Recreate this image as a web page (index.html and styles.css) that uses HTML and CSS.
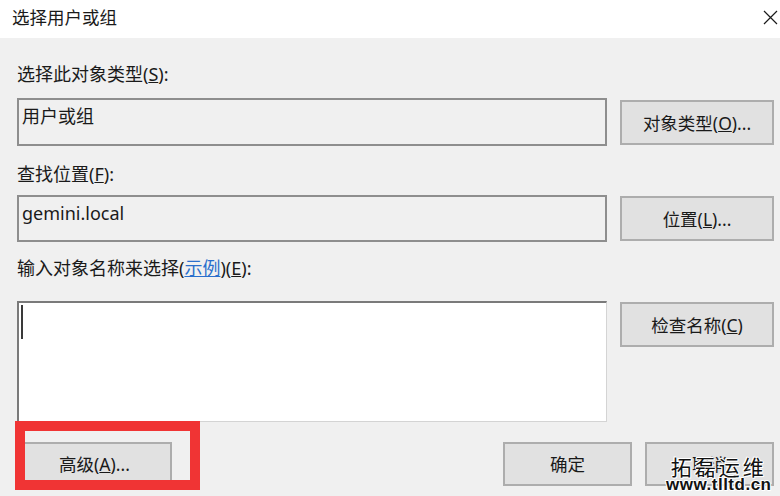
FILE: index.html
```html
<!DOCTYPE html>
<html lang="zh-CN">
<head>
<meta charset="utf-8">
<title>选择用户或组</title>
<link rel="stylesheet" href="styles.css">
</head>
<body>
<div class="window">
  <div class="titlebar">
    <span class="title">选择用户或组</span>
    <span class="close" aria-label="关闭">
      <svg width="15" height="15" viewBox="0 0 15 15"><path d="M1 1 L14 14 M14 1 L1 14" stroke="#1a1a1a" stroke-width="1.2" fill="none"/></svg>
    </span>
  </div>
  <div class="main">
    <div class="label l1">选择此对象类型(<u>S</u>):</div>
    <div class="row r1">
      <div class="field">用户或组</div>
      <button class="btn side">对象类型(<u>O</u>)...</button>
    </div>
    <div class="label l2">查找位置(<u>F</u>):</div>
    <div class="row r2">
      <div class="field">gemini.local</div>
      <button class="btn side">位置(<u>L</u>)...</button>
    </div>
    <div class="label l3">输入对象名称来选择(<span class="link">示例</span>)(<u>E</u>):</div>
    <div class="row r3">
      <div class="input"><span class="caret"></span></div>
      <button class="btn side">检查名称(<u>C</u>)</button>
    </div>
    <div class="bottom">
      <button class="btn adv">高级(<u>A</u>)...</button>
      <div class="spacer"></div>
      <button class="btn action">确定</button>
      <button class="btn action">取消</button>
      <div class="highlight"></div>
      <div class="watermark">
        <div class="wm1">拓磊运维</div>
        <div class="wm2">www.tlltd.cn</div>
      </div>
    </div>
  </div>
</div>
</body>
</html>
```

FILE: styles.css
```css
* { box-sizing: border-box; }
html, body { margin: 0; padding: 0; }
body {
  width: 780px;
  height: 496px;
  overflow: hidden;
  background: #f0f0f0;
  font-family: "Noto Sans", "Noto Sans CJK SC", sans-serif;
  font-size: 18px;
  color: #1a1a1a;
}
.window { width: 780px; height: 496px; }
.titlebar {
  height: 38px;
  background: #ffffff;
  display: flex;
  align-items: center;
  justify-content: space-between;
  padding: 0 2px 4px 12px;
}
.title { font-size: 17.5px; line-height: 20px; }
.close { display: flex; width: 15px; height: 15px; }
.main { padding: 0 6px 0 17px; }
.label { height: 20px; line-height: 20px; }
.l1 { margin-top: 26px; }
.l2 { margin-top: 18px; }
.l3 { margin-top: 16px; }
.row { display: flex; gap: 13px; align-items: flex-start; }
.r1 { margin-top: 14px; }
.r2 { margin-top: 11px; }
.r3 { margin-top: 23px; }
.field {
  width: 590px;
  height: 48px;
  border: 2px solid #8e8e8e;
  background: #f0f0f0;
  padding: 6px 0 0 3px;
  line-height: 20px;
}
.r2 .field { height: 47px; }
.btn {
  font-family: inherit;
  font-size: 17.5px;
  color: #1a1a1a;
  background: #e1e1e1;
  border: 2px solid #adadad;
  padding: 0;
  line-height: 20px;
  height: 45px;
}
.side { width: 154px; margin-top: 2px; }
.r2 .side, .r3 .side { margin-top: 1px; }
.input {
  width: 590px;
  height: 121px;
  background: #ffffff;
  border-top: 2px solid #7a7a7a;
  border-left: 2px solid #7a7a7a;
  border-right: 1px solid #d4d4d4;
  border-bottom: 1px solid #d4d4d4;
  padding: 2px 0 0 2px;
}
.caret { display: block; width: 2px; height: 34px; background: #3a3a3a; }
.link { color: #2a6fcc; text-decoration: underline; }
.bottom {
  position: relative;
  display: flex;
  gap: 13px;
  margin-top: 20px;
}
.action { width: 129px; height: 44px; }
.adv { width: 155px; height: 44px; }
.spacer { flex: 1; }
.highlight {
  position: absolute;
  left: -2px;
  top: -21px;
  width: 185px;
  height: 69px;
  border: 10px solid #f03434;
}
.watermark {
  position: absolute;
  left: 649px;
  top: 13px;
  text-align: center;
  color: #111;
  text-shadow: 1px 0 0 #fff, -1px 0 0 #fff, 0 1px 0 #fff, 0 -1px 0 #fff, 1px 1px 0 #fff, -1px -1px 0 #fff;
}
.wm1 {
  font-family: "Noto Sans CJK SC", sans-serif;
  font-size: 21px;
  line-height: 22px;
  letter-spacing: 3px;
}
.wm2 {
  font-family: "Liberation Sans", sans-serif;
  font-weight: bold;
  font-size: 17px;
  line-height: 16px;
  letter-spacing: 0.5px;
}
```
